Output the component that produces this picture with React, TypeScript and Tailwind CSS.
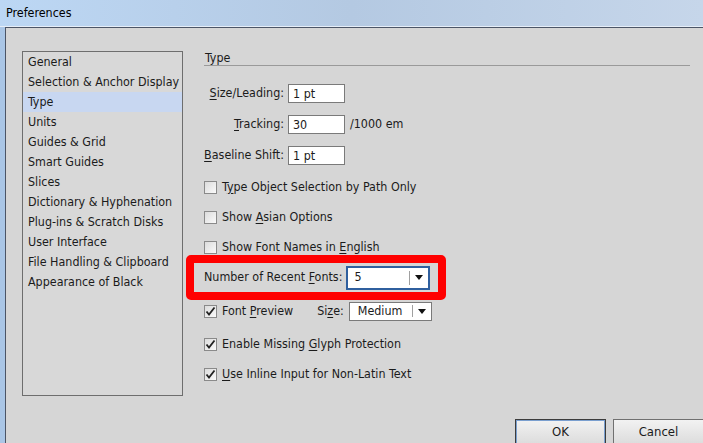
import React from 'react';

const sideItems = [
  'General',
  'Selection & Anchor Display',
  'Type',
  'Units',
  'Guides & Grid',
  'Smart Guides',
  'Slices',
  'Dictionary & Hyphenation',
  'Plug-ins & Scratch Disks',
  'User Interface',
  'File Handling & Clipboard',
  'Appearance of Black',
];

const Checkbox = ({ checked }: { checked?: boolean }) => (
  <span className="w-[13px] h-[13px] border border-[#8a8a8a] bg-gradient-to-br from-[#dcdcdc] to-[#fafafa] flex items-center justify-center shrink-0">
    {checked && (
      <svg width="11" height="11" viewBox="0 0 11 11">
        <path d="M1.5 5.5 L4 8.5 L9.5 1.5" fill="none" stroke="#222" strokeWidth="1.8" />
      </svg>
    )}
  </span>
);

const Arrow = () => (
  <svg width="8" height="5" viewBox="0 0 8 5">
    <path d="M0 0 H8 L4 5 Z" fill="#111" />
  </svg>
);

const Field = ({ value }: { value: string }) => (
  <div className="w-[57px] h-[19px] bg-white border border-[#7a7a7a] px-[4px] leading-[17px]">{value}</div>
);

const CheckRow = ({ checked, children }: { checked?: boolean; children: React.ReactNode }) => (
  <div className="flex items-center gap-[5px] h-[30px]">
    <Checkbox checked={checked} />
    <span>{children}</span>
  </div>
);

export default function App() {
  return (
    <div
      className="w-[703px] h-[443px] overflow-hidden flex flex-col text-[12.4px] text-[#1b1b1b] bg-[#aac6e6]"
      style={{ fontFamily: '"DejaVu Sans Condensed", "DejaVu Sans", sans-serif' }}
    >
      {/* title bar */}
      <div className="h-[26px] shrink-0 flex items-center px-[6px] bg-linear-to-r from-[#bcd7f4] via-[#b4c9e2] to-[#c6d6ea] text-black">
        Preferences
      </div>
      <div className="h-px bg-[#e6eef8] shrink-0" />

      <div className="flex-1 flex flex-col ml-[5px] border-l border-t border-[#4c5566] bg-[#d6d6d6]">
        <div className="flex">
          {/* category list */}
          <div className="ml-[16px] mt-[23px] w-[161px] h-[345px] border border-[#6e6e6e] bg-[#d8d8d8]">
            {sideItems.map((item) => (
              <div
                key={item}
                className={`h-[20px] leading-[20px] pl-[5px] whitespace-nowrap ${item === 'Type' ? 'bg-[#c8d7f1]' : ''}`}
              >
                {item}
              </div>
            ))}
          </div>

          {/* panel */}
          <div className="ml-[21px] mt-[23px] flex-1 mr-[13px]">
            <div className="border-b border-[#9a9a9a] h-[15px] leading-[14px] pl-[1px]">Type</div>

            <div className="mt-[18px] grid grid-cols-[80px_auto_auto] items-center gap-x-[4px] gap-y-[12px] w-max">
              <span className="text-right">
                <u className="underline-offset-2">S</u>ize/Leading:
              </span>
              <Field value="1 pt" />
              <span />
              <span className="text-right">
                <u className="underline-offset-2">T</u>racking:
              </span>
              <Field value="30" />
              <span className="ml-[1px]">/1000 em</span>
              <span className="text-right">
                <u className="underline-offset-2">B</u>aseline Shift:
              </span>
              <Field value="1 pt" />
              <span />
            </div>

            <div className="mt-[7px]">
              <CheckRow>
                T<u className="underline-offset-2">y</u>pe Object Selection by Path Only
              </CheckRow>
              <CheckRow>
                Show <u className="underline-offset-2">A</u>sian Options
              </CheckRow>
              <CheckRow>
                Show Font Names in <u className="underline-offset-2">E</u>nglish
              </CheckRow>
            </div>

            <div className="ml-[-18px] mt-[-7px] w-[260px] h-[45px] border-[8px] border-[#ff0000] rounded-[5px] flex items-center pl-[10px]">
              <span>
                Number of Recent <u className="underline-offset-2">F</u>onts:
              </span>
              <div className="ml-[4px] w-[84px] h-[24px] border-[2px] border-[#2f5f9e] bg-white flex items-center">
                <span className="flex-1 pl-[6px]">5</span>
                <span className="w-px h-[14px] bg-[#a0a0a0]" />
                <span className="w-[18px] flex justify-center">
                  <Arrow />
                </span>
              </div>
            </div>

            <div className="flex items-center h-[22px]">
              <Checkbox checked />
              <span className="ml-[5px]">
                Font <u className="underline-offset-2">P</u>review
              </span>
              <span className="ml-[24px]">
                Si<u className="underline-offset-2">z</u>e:
              </span>
              <div className="ml-[5px] w-[83px] h-[19px] border border-[#7a7a7a] bg-white flex items-center">
                <span className="flex-1 pl-[8px]">Medium</span>
                <span className="w-px h-[12px] bg-[#a0a0a0]" />
                <span className="w-[18px] flex justify-center">
                  <Arrow />
                </span>
              </div>
            </div>

            <div className="mt-[7px]">
              <CheckRow checked>
                Enable Missing <u className="underline-offset-2">G</u>lyph Protection
              </CheckRow>
              <CheckRow checked>
                <u className="underline-offset-2">U</u>se Inline Input for Non-Latin Text
              </CheckRow>
            </div>
          </div>
        </div>

        {/* buttons */}
        <div className="flex justify-end gap-[7px] mt-[23px] mr-[-1px]">
          <button className="w-[91px] h-[26px] border border-[#3c3c3c] bg-linear-to-b from-[#f2f2f2] to-[#dcdcdc] text-[13px] outline outline-1 outline-[#7a9fcf] -outline-offset-2">
            OK
          </button>
          <button className="w-[91px] h-[26px] border border-[#707070] bg-linear-to-b from-[#f2f2f2] to-[#dcdcdc] text-[13px]">
            Cancel
          </button>
        </div>
      </div>
    </div>
  );
}
